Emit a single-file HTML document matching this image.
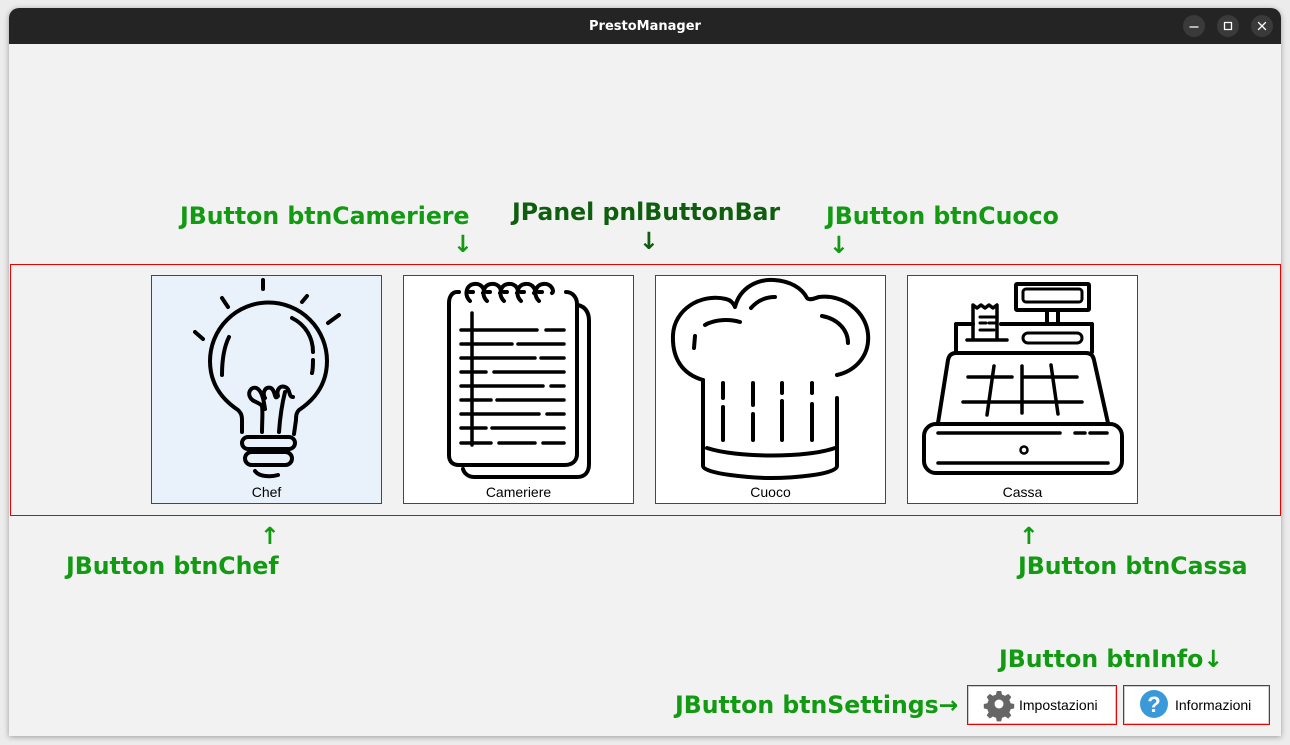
<!DOCTYPE html>
<html><head><meta charset="utf-8"><style>
body{margin:0;width:1290px;height:745px;background:#ececec;position:relative;overflow:hidden;font-family:"Liberation Sans",sans-serif}
.win{position:absolute;left:9px;top:8px;width:1272px;height:728px;background:#f2f2f2;border-radius:10px 10px 0 0;box-shadow:0 1px 6px rgba(0,0,0,.35);overflow:hidden}
.tb{position:absolute;left:0;top:0;width:1272px;height:36px;background:#242424;color:#fff;font:bold 13px "DejaVu Sans",sans-serif;text-align:center;line-height:37px}
.g{position:absolute;font:bold 23.6px "DejaVu Sans",sans-serif;color:#129a12;white-space:nowrap;line-height:26px}
.rb{position:absolute;width:231px;height:229px;background:#ee0000}
.btn{position:absolute;left:1px;top:1px;width:229px;height:227px;background:#fff}
.btn span{position:absolute;left:0;right:0;bottom:3px;text-align:center;font-size:14px;color:#000}
.sb{position:absolute;height:38px;border:1px solid #e00;background:#fff;font-size:14px;color:#000;box-shadow:inset 0 0 0 1px #ccc}
</style></head><body>
<div class="win">
<div class="tb">PrestoManager</div>
</div>
<div style="position:absolute;left:10px;top:264px;width:1269px;height:250px;border:1px solid #e00"></div>
<div class="rb" style="left:151px;top:275px"><div class="btn" style="background:#e9f1fb"><span>Chef</span></div></div>
<div class="rb" style="left:403px;top:275px"><div class="btn"><span>Cameriere</span></div></div>
<div class="rb" style="left:655px;top:275px"><div class="btn"><span>Cuoco</span></div></div>
<div class="rb" style="left:907px;top:275px"><div class="btn"><span>Cassa</span></div></div>
<div class="g" style="left:180px;top:203px">JButton btnCameriere</div>
<div class="g" style="left:512px;top:199px;color:#0e5e0e">JPanel pnlButtonBar</div>
<div class="g" style="left:826px;top:203px">JButton btnCuoco</div>
<div class="g" style="left:453px;top:231px">↓</div>
<div class="g" style="left:639px;top:228px;color:#0e5e0e">↓</div>
<div class="g" style="left:829px;top:232px">↓</div>
<div class="g" style="left:260px;top:523px">↑</div>
<div class="g" style="left:1019px;top:523px">↑</div>
<div class="g" style="left:66px;top:553px">JButton btnChef</div>
<div class="g" style="left:1018px;top:553px">JButton btnCassa</div>
<div class="g" style="left:999px;top:646px">JButton btnInfo↓</div>
<div class="g" style="left:675px;top:692px">JButton btnSettings→</div>
<div class="sb" style="left:967px;top:685px;width:148px"><span style="position:absolute;left:51px;top:11px">Impostazioni</span></div>
<div class="sb" style="left:1123px;top:685px;width:145px"><span style="position:absolute;left:51px;top:11px">Informazioni</span></div>
<svg width="1290" height="745" style="position:absolute;left:0;top:0" fill="none" stroke="#000" stroke-width="4" stroke-linecap="round" stroke-linejoin="round">
<g stroke="none" fill="#3a3a3a"><circle cx="1194" cy="26" r="11"/><circle cx="1228" cy="26" r="11"/><circle cx="1262" cy="26" r="11"/></g>
<g stroke="#fff" stroke-width="1.3"><path d="M1190 27h8"/><rect x="1224.5" y="22.5" width="7" height="7"/><path d="M1258.5 22.5l7 7M1265.5 22.5l-7 7"/></g>
<path d="M263 280v9M222 298l6 9M307 296l-5 6M195 332l8 7M339 315l-11 8"/>
<path d="M242 432v-12c0-6-2-8-4-10C220 398 210 382 210 361a58 58 0 0 1 117 0c0 21-10 37-28 49-2 2-3 4-3 10l-2 14"/>
<path d="M229 337c-5 10-7 22-7 38M292 318c14 7 21 20 21 34M313 360c0 5 0 9-1 13"/>
<path d="M262 432c0-10 1-20 0-26c-3-4-10-4-12-9c-3-6 3-12 8-8c5 4 6 14 7 20M265 398c-3-5 0-12 6-10c5 3 3 13 7 8c-2-6 2-11 7-9c6 2 3 10 8 10M279 432c1-14 3-28 6-40"/>
<rect x="242" y="437" width="53" height="12" rx="6"/><rect x="245" y="452" width="47" height="13" rx="6.5"/>
<path d="M255 471c4 6 16 6 23 4"/>
<path d="M578 305c8 2 11 8 11 16v143c0 8-4 13-12 13H474c-6 0-10-4-11-8"/>
<path d="M459 292h-2c-5 0-8 5-8 11v152c0 7 4 10 10 10h106c7 0 12-4 12-11V304c0-7-5-12-11-12"/>
<path d="M470 301c-6-6-4-16 4-17c8-1 12 7 9 9M487 301c-6-6-4-16 4-17c8-1 12 7 9 9M504 301c-6-6-4-16 4-17c8-1 12 7 9 9M521 301c-6-6-4-16 4-17c8-1 12 7 9 9M539 301c-6-6-4-16 4-17c8-1 12 7 9 9M473 292h-3M490 292h-3M507 292h-3M524 292h-3M542 292h-3"/>
<path d="M472 313v132" stroke-width="3.5"/>
<g stroke-width="3.5"><path d="M461 330h76M546 330h18M461 344h51M518 344h46M461 358h74M541 358h23M461 372h25M494 372h70M461 386h82M551 386h13M461 400h30M497 400h67M461 414h78M547 414h17M461 428h25M492 428h72M461 443h30M499 443h36M543 443h21"/></g>
<path d="M703 380C682 374 672 358 673 335c1-25 27-42 53-36c4 1 7 3 9 8c5-20 23-28 39-27c16 1 28 8 33 18c3 3 8 0 12-1c25-3 47 15 49 37c2 22-13 37-31 41"/>
<path d="M703 380v86c0 8 50 12 68 12s66-3 66-12v-68"/>
<path d="M707 448c30 10 100 10 128 0"/>
<path d="M705 325c10-6 25-6 35-3M695 336l-1 12M751 308c7-8 16-11 24-11M822 316c16 3 26 14 26 27"/>
<path d="M723 383v15M723 407v33M753 383v22M753 414v26M782 383v10M782 401v39M812 383v10M812 404v36"/>
<rect x="1016" y="284" width="73" height="26" rx="1"/><rect x="1023" y="289" width="59" height="13" rx="3" stroke-width="3"/>
<path d="M1047 310v13M1058 310v13"/>
<path d="M973 324h-17v28M1001 324h91v28"/>
<path d="M973 340v-35l4 3 4-3 4 3 4-3 4 3 4-3v35M967 340h40" stroke-width="3.5"/>
<path d="M980 317h15M980 323h6M989 323h6M980 330h14" stroke-width="3"/>
<rect x="1023" y="333" width="59" height="10" rx="5" stroke-width="3"/>
<path d="M938 423l10-63c1-5 4-7 8-7h130c4 0 7 2 8 7l14 63"/>
<path d="M968 377h44M1022 377h55M963 402h119M994 366l-7 49M1022 366v47M1051 365l7 49" stroke-width="3.5"/>
<rect x="924" y="424" width="198" height="49" rx="12"/>
<path d="M938 433h122M1075 433h10M1090 433h17M938 463h170" stroke-width="3.5"/>
<circle cx="1024" cy="450" r="3.5" stroke-width="2.5"/>
<g transform="translate(999,704)" fill="#666" stroke="none">
<path d="M-2.2-13h4.4l0.8 3.6a10 10 0 0 1 3.1 1.3l3.1-2 3.1 3.1-2 3.1a10 10 0 0 1 1.3 3.1l3.6 0.8v4.4l-3.6 0.8a10 10 0 0 1-1.3 3.1l2 3.1-3.1 3.1-3.1-2a10 10 0 0 1-3.1 1.3l-0.8 3.6h-4.4l-0.8-3.6a10 10 0 0 1-3.1-1.3l-3.1 2-3.1-3.1 2-3.1a10 10 0 0 1-1.3-3.1l-3.6-0.8v-4.4l3.6-0.8a10 10 0 0 1 1.3-3.1l-2-3.1 3.1-3.1 3.1 2a10 10 0 0 1 3.1-1.3z"/>
<circle r="4.5" fill="#fff"/></g>
<circle cx="1154" cy="704" r="14" fill="#3a9ad9" stroke="none"/>
<text x="1154" y="712" text-anchor="middle" fill="#fff" stroke="none" font-family="Liberation Sans" font-weight="bold" font-size="22">?</text>
</svg>
</body></html>
